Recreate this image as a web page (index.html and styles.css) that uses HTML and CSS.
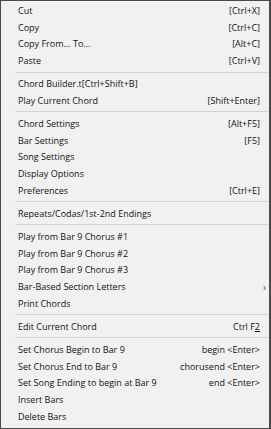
FILE: index.html
```html
<!DOCTYPE html>
<html lang="en">
<head>
    <meta charset="UTF-8">
    <title>Chord menu</title>
    <link rel="stylesheet" href="styles.css">
</head>
<body>
<div id="menu">
    <ul class="menu-list">
        <li class="item"><span class="label">Cut</span><span class="key">[Ctrl+X]</span></li>
        <li class="item"><span class="label">Copy</span><span class="key">[Ctrl+C]</span></li>
        <li class="item"><span class="label">Copy From... To...</span><span class="key">[Alt+C]</span></li>
        <li class="item"><span class="label">Paste</span><span class="key">[Ctrl+V]</span></li>
        <li class="sep"></li>
        <li class="item"><span class="label">Chord Builder.t[Ctrl+Shift+B]</span></li>
        <li class="item"><span class="label">Play Current Chord</span><span class="key">[Shift+Enter]</span></li>
        <li class="sep"></li>
        <li class="item"><span class="label">Chord Settings</span><span class="key">[Alt+F5]</span></li>
        <li class="item"><span class="label">Bar Settings</span><span class="key">[F5]</span></li>
        <li class="item"><span class="label">Song Settings</span></li>
        <li class="item"><span class="label">Display Options</span></li>
        <li class="item"><span class="label">Preferences</span><span class="key">[Ctrl+E]</span></li>
        <li class="sep"></li>
        <li class="item"><span class="label">Repeats/Codas/1st-2nd Endings</span></li>
        <li class="sep"></li>
        <li class="item"><span class="label">Play from Bar 9 Chorus #1</span></li>
        <li class="item"><span class="label">Play from Bar 9 Chorus #2</span></li>
        <li class="item"><span class="label">Play from Bar 9 Chorus #3</span></li>
        <li class="item sub"><span class="label">Bar-Based Section Letters</span><span class="arrow">&#8250;</span></li>
        <li class="item"><span class="label">Print Chords</span></li>
        <li class="sep"></li>
        <li class="item"><span class="label">Edit Current Chord</span><span class="key">Ctrl F<u>2</u></span></li>
        <li class="sep"></li>
        <li class="item"><span class="label">Set Chorus Begin to Bar 9</span><span class="key">begin &lt;Enter&gt;</span></li>
        <li class="item"><span class="label">Set Chorus End to Bar 9</span><span class="key">chorusend &lt;Enter&gt;</span></li>
        <li class="item"><span class="label">Set Song Ending to begin at Bar 9</span><span class="key">end &lt;Enter&gt;</span></li>
        <li class="item"><span class="label">Insert Bars</span></li>
        <li class="item"><span class="label">Delete Bars</span></li>
    </ul>
</div>
</body>
</html>
```

FILE: styles.css
```css
* {
    margin: 0;
    padding: 0;
    box-sizing: border-box;
}
ul, li {
    list-style: none;
}
body {
    background-color: #f0f0f0;
    font-family: "Open Sans", "Noto Sans", sans-serif;
    font-size: 9px;
    color: #111;
}
#menu {
    width: 271px;
    height: 429px;
    background-color: #f1f1f1;
    border: 1px solid #4a4a4a;
    border-right-width: 2px;
    padding: 1px 0 3px 0;
}
.item {
    display: flex;
    align-items: center;
    justify-content: space-between;
    height: 16.75px;
    padding: 0 9px 0 17px;
    white-space: nowrap;
}
.key {
    text-align: right;
}
.sub {
    padding-right: 3px;
}
.arrow {
    font-size: 10px;
    color: #555;
}
.sep {
    height: 6.25px;
    margin-left: 14px;
    display: flex;
    align-items: center;
}
.sep::before {
    content: "";
    display: block;
    width: 100%;
    height: 1px;
    background-color: #d4d4d4;
}
```
